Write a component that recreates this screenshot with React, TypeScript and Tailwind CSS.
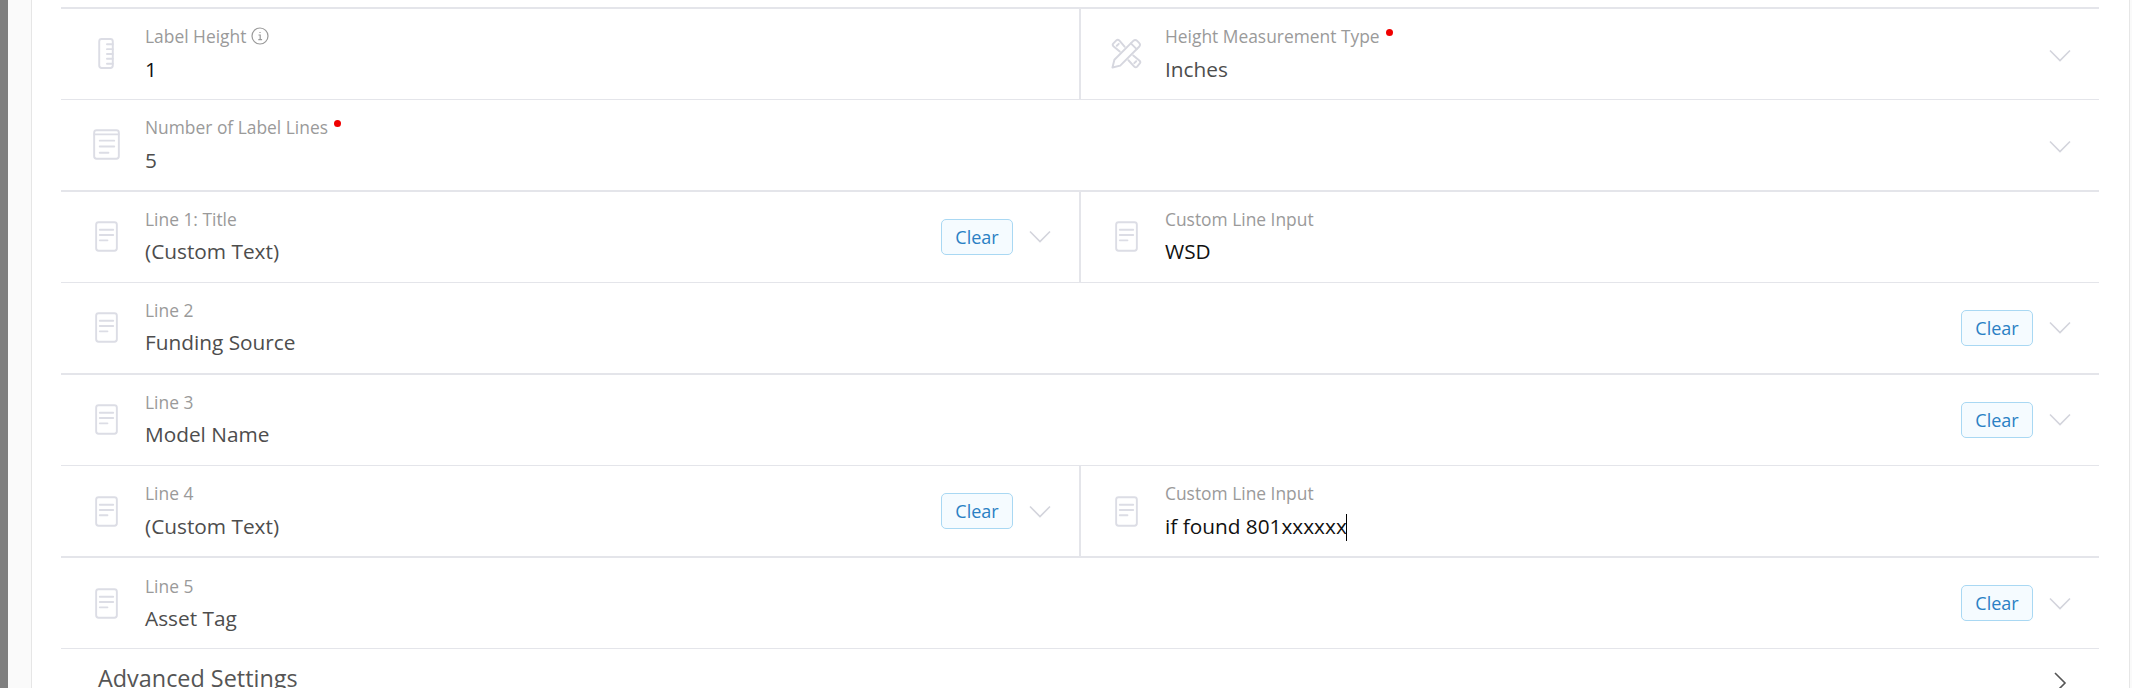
import { JSX, ReactNode } from 'react';

const DocIcon = ({ wide = false }: { wide?: boolean }): JSX.Element => (
	<svg
		width={wide ? 27 : 23}
		height="31"
		viewBox={wide ? '0 0 28 32' : '0 0 24 32'}
		fill="none"
		stroke="#dcdde5"
		strokeLinecap="round"
	>
		<rect x="1.2" y="1.2" width={wide ? 25.6 : 21.6} height="29.6" rx="2.5" strokeWidth="2" />
		{wide ? (
			<>
				<path d="M1.5 5.5h25" strokeWidth="2" />
				<path d="M7 12h15M7 18h15M7 24.5h9" strokeWidth="2" />
			</>
		) : (
			<path d="M5 9h14M5 14.5h14M5 20h8" strokeWidth="2" />
		)}
	</svg>
);

const RulerIcon = (): JSX.Element => (
	<svg width="16" height="31" viewBox="0 0 16 32" fill="none" stroke="#dcdde5" strokeWidth="2" strokeLinecap="round">
		<rect x="1" y="1" width="14" height="30" rx="2.5" />
		<path d="M9 6.5h6M9 11.5h6M9 16.5h6M9 21.5h6M9 26.5h6" />
	</svg>
);

const PencilRulerIcon = (): JSX.Element => (
	<svg width="31" height="31" viewBox="0 0 32 32" fill="none" stroke="#d6d7df" strokeWidth="2" strokeLinejoin="round" strokeLinecap="round">
		<path d="M1.5 30.5l2-8L23 3q2-2 4 0l2 2q2 2 0 4L9.5 28.5z" />
		<path d="M20.5 5.5l6 6" />
		<path d="M9 14L2.5 8.5q-1.5-1.500 0-3l3-3q1.500-1.500 3 0L14 9" />
		<path d="M18 23l6 6.500q1.500 1.500 3 0l2.500-3q1.500-1.500 0-3L23 18" />
		<path d="M6 8l2-2M24 26l2-2" />
	</svg>
);

const Chevron = ({ className = '' }: { className?: string }): JSX.Element => (
	<svg width="22" height="13" viewBox="0 0 22 13" fill="none" stroke="#d3d4dc" strokeWidth="1.6" className={`shrink-0 ${className}`}>
		<path d="M1 1.500l10 10 10-10" />
	</svg>
);

const ClearButton = (): JSX.Element => (
	<button className="flex h-[36px] w-[72px] shrink-0 items-center justify-center rounded-[5px] border border-[#a9d8f3] bg-[#f5fbff] pt-[1px] text-[18px] text-[#2a80c4]">
		Clear
	</button>
);

const Dot = (): JSX.Element => (
	<span className="mb-[7px] ml-[6px] inline-block h-[7px] w-[7px] rounded-full bg-[#f00000]" />
);

interface CellProps {
	icon: ReactNode;
	label: ReactNode;
	value: ReactNode;
	dark?: boolean;
	low?: boolean;
	children?: ReactNode;
	className?: string;
}

const Cell = ({ icon, label, value, dark = false, low = false, children, className = '' }: CellProps): JSX.Element => (
	<div className={`flex h-full items-center ${className}`}>
		<div className="flex w-[84px] shrink-0 justify-center pl-[6px]">{icon}</div>
		<div className="min-w-0 flex-1">
			<div className="flex h-[24px] items-center text-[17.4px] text-[#9a9a9a]">{label}</div>
			<div className={`h-[30px] text-[20.8px] leading-[30px] ${low ? 'mt-[6px]' : 'mt-[5px]'} ${dark ? 'text-[#111111]' : 'text-[#4d4d4d]'}`}>{value}</div>
		</div>
		{children}
	</div>
);

const Row = ({ children, thick = false }: { children: ReactNode; thick?: boolean }): JSX.Element => (
	<div className={`flex h-[91.55px] border-t-[#e4e5ea] ${thick ? 'border-t-2' : 'border-t'}`}>{children}</div>
);

const Actions = ({ clear = true }: { clear?: boolean }): JSX.Element => (
	<div className="flex items-center gap-[16px] pr-[28px] pl-[16px]">
		{clear && <ClearButton />}
		<Chevron className={clear ? '' : 'mt-[4px]'} />
	</div>
);

export default function App(): JSX.Element {
	return (
		<div className="flex h-[688px] overflow-hidden bg-white font-['Open_Sans',sans-serif]">
			<div className="w-[8px] shrink-0 bg-[#7f7f7f]" />
			<div className="w-[24px] shrink-0 border-r border-r-[#e6e6e6] bg-[#fafafa]" />
			<div className="w-[2097px] shrink-0 pt-[7px] pl-[29px]">
				<div className="w-[2038px]">
					<Row thick>
						<Cell
							icon={<RulerIcon />}
							label={
								<>
									Label Height
									<svg width="18" height="18" viewBox="0 0 18 18" fill="none" stroke="#9a9a9a" strokeWidth="1.2" className="ml-[5px]">
										<circle cx="9" cy="9" r="8" />
										<path d="M7.500 8h1.700v4.500M7.300 12.700h3.800M9 5v1" />
									</svg>
								</>
							}
							value="1"
							dark
							low
							className="w-[1020px] border-r-2 border-r-[#e4e5ea]"
						/>
						<Cell
							icon={<PencilRulerIcon />}
							label={
								<>
									Height Measurement Type
									<Dot />
								</>
							}
							value="Inches"
							low
							className="flex-1"
						>
							<Actions clear={false} />
						</Cell>
					</Row>
					<Row>
						<Cell
							icon={<DocIcon wide />}
							label={
								<>
									Number of Label Lines
									<Dot />
								</>
							}
							value="5"
							low
							className="flex-1"
						>
							<Actions clear={false} />
						</Cell>
					</Row>
					<Row thick>
						<Cell icon={<DocIcon />} label="Line 1: Title" value="(Custom Text)" className="w-[1020px] border-r-2 border-r-[#e4e5ea]">
							<Actions />
						</Cell>
						<Cell icon={<DocIcon />} label="Custom Line Input" value="WSD" dark className="flex-1" />
					</Row>
					<Row>
						<Cell icon={<DocIcon />} label="Line 2" value="Funding Source" className="flex-1">
							<Actions />
						</Cell>
					</Row>
					<Row thick>
						<Cell icon={<DocIcon />} label="Line 3" value="Model Name" className="flex-1">
							<Actions />
						</Cell>
					</Row>
					<Row>
						<Cell icon={<DocIcon />} label="Line 4" value="(Custom Text)" className="w-[1020px] border-r-2 border-r-[#e4e5ea]">
							<Actions />
						</Cell>
						<Cell
							icon={<DocIcon />}
							label="Custom Line Input"
							value={
								<>
									if found 801xxxxxx
									<span className="-ml-[1px] inline-block h-[27px] w-[1px] bg-black align-middle" />
								</>
							}
							dark
							className="flex-1"
						/>
					</Row>
					<Row thick>
						<Cell icon={<DocIcon />} label="Line 5" value="Asset Tag" className="flex-1">
							<Actions />
						</Cell>
					</Row>
					<div className="flex h-[60px] items-start justify-between border-t border-t-[#e4e5ea] pt-[11px] pr-[32px] pl-[37px]">
						<span className="text-[23.4px] leading-[36px] text-[#555555]">Advanced Settings</span>
						<svg width="14" height="24" viewBox="0 0 14 24" fill="none" stroke="#555555" strokeWidth="1.6" className="mt-[11px]">
							<path d="M2 2l10 10L2 22" />
						</svg>
					</div>
				</div>
			</div>
			<div className="flex-1 border-l border-l-[#e6e6e6] bg-[#fafafa]" />
		</div>
	);
}
